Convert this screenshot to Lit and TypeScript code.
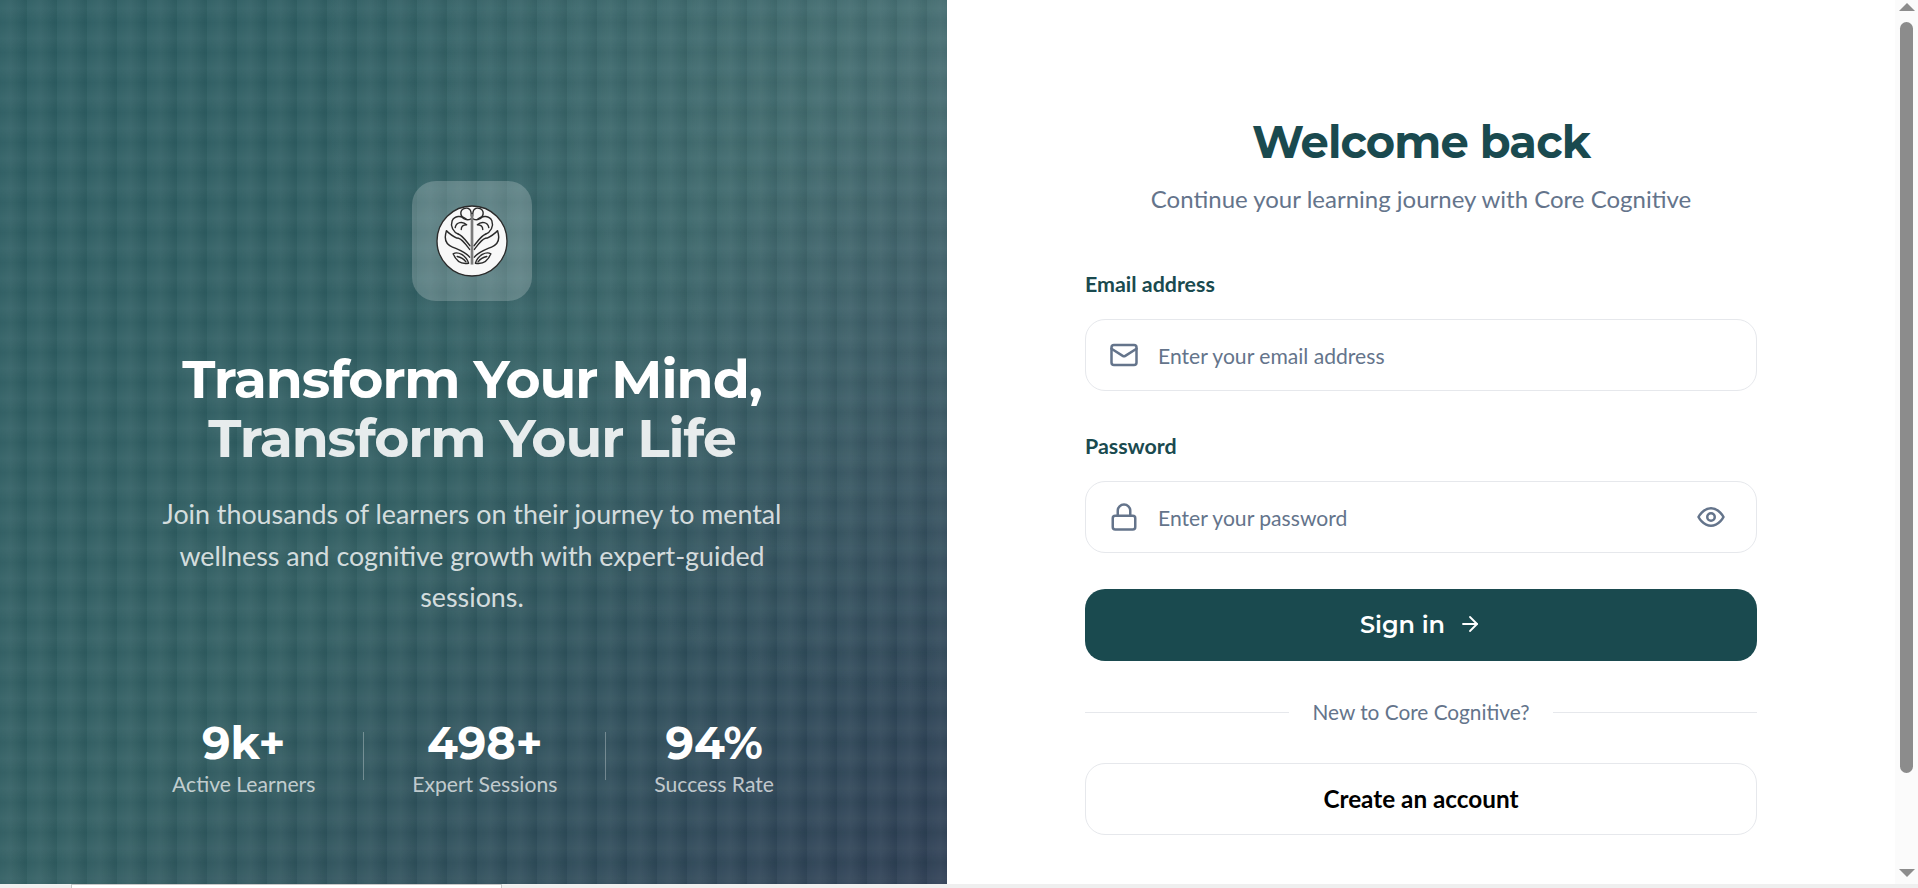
import { css, html, LitElement, svg } from "lit";
import { customElement } from "lit/decorators.js";

const brainHalf = svg`
  <path d="M137 74 C126 80 110 76 107 60 C105 44 124 38 133 46 C138 51 138 58 138 66" />
  <path d="M122 74 C108 64 88 64 81 80 C75 96 84 114 100 120" />
  <path d="M90 100 C93 84 112 80 124 92 C114 92 108 96 108 106" />
  <path d="M100 120 C112 124 122 140 134 154" />
  <path d="M64 110 C76 120 88 132 100 132 C110 134 120 148 133 165" />
  <path d="M64 110 C56 134 62 150 82 158 C100 166 120 172 133 188" />
  <path d="M84 178 C98 170 122 182 130 206 C108 210 92 198 84 178 Z" />
  <path d="M96 186 C106 188 116 194 122 202" />
`;

@customElement("app-root")
export class AppRoot extends LitElement {
  render() {
    return html`
      <div class="page">
        <div class="body">
          <main class="split">
            <section class="hero">
              <div class="logo-box">
                <svg class="logo" viewBox="33 33 214 214">
                  <circle cx="140" cy="140" r="104" fill="#f8f8f8" stroke="#2b2b2b" stroke-width="4" />
                  <g fill="none" stroke="#2a2a2a" stroke-width="4.2" stroke-linejoin="round" stroke-linecap="round">
                    ${brainHalf}
                    <g transform="matrix(-1 0 0 1 280 0)">${brainHalf}</g>
                  </g>
                  <path d="M140 60 V210" stroke="#7c7c7c" stroke-width="8" />
                </svg>
              </div>
              <h1>Transform Your Mind,<br /><span>Transform Your Life</span></h1>
              <p class="lead">
                Join thousands of learners on their journey to mental wellness
                and cognitive growth with expert-guided sessions.
              </p>
              <div class="stats">
                <div class="stat"><strong>9k+</strong><span>Active Learners</span></div>
                <i class="rule"></i>
                <div class="stat"><strong>498+</strong><span>Expert Sessions</span></div>
                <i class="rule"></i>
                <div class="stat"><strong>94%</strong><span>Success Rate</span></div>
              </div>
            </section>

            <section class="panel">
              <form class="form" @submit=${(e: Event) => e.preventDefault()}>
                <h2>Welcome back</h2>
                <p class="sub">Continue your learning journey with Core Cognitive</p>

                <label class="label email-label" for="email">Email address</label>
                <div class="field">
                  <svg class="icon" viewBox="0 0 24 24">
                    <rect x="2" y="4" width="20" height="16" rx="2" />
                    <path d="m22 7-8.97 5.7a1.94 1.94 0 0 1-2.06 0L2 7" />
                  </svg>
                  <input id="email" type="email" placeholder="Enter your email address" />
                </div>

                <label class="label password-label" for="password">Password</label>
                <div class="field">
                  <svg class="icon" viewBox="0 0 24 24">
                    <rect x="3" y="11" width="18" height="11" rx="2" />
                    <path d="M7 11V7a5 5 0 0 1 10 0v4" />
                  </svg>
                  <input id="password" type="password" placeholder="Enter your password" />
                  <svg class="icon eye" viewBox="0 0 24 24">
                    <path d="M2 12s3.6-7 10-7 10 7 10 7-3.6 7-10 7-10-7-10-7Z" />
                    <circle cx="12" cy="12" r="3" />
                  </svg>
                </div>

                <button class="primary" type="submit">
                  Sign in
                  <svg viewBox="0 0 24 24">
                    <path d="M5 12h14" />
                    <path d="m12 5 7 7-7 7" />
                  </svg>
                </button>

                <div class="divider"><span>New to Core Cognitive?</span></div>

                <button class="secondary" type="button">Create an account</button>
              </form>
            </section>
          </main>

          <div class="vbar">
            <i class="arrow up"></i>
            <i class="vthumb"></i>
            <i class="arrow down"></i>
          </div>
        </div>
        <div class="hbar"><i class="hthumb"></i></div>
      </div>
    `;
  }

  static styles = css`
    :host {
      display: block;
      height: 888px;
      overflow: hidden;
      font-family: "Lato", "Liberation Sans", sans-serif;
    }

    * {
      box-sizing: border-box;
    }

    .page {
      display: flex;
      flex-direction: column;
      height: 888px;
    }

    .body {
      display: flex;
      height: 884px;
    }

    .split {
      flex: 1;
      display: grid;
      grid-template-columns: 947px 1fr;
    }

    .hero {
      display: flex;
      flex-direction: column;
      align-items: center;
      padding: 181px 0 0;
      color: #fff;
      background-color: #2d5c60;
      background-image:
        linear-gradient(90deg, rgba(255, 255, 255, 0.025), rgba(255, 255, 255, 0.05) 45%, rgba(0, 0, 0, 0.035)),
        linear-gradient(180deg, rgba(0, 0, 0, 0.02), rgba(255, 255, 255, 0.03) 50%, rgba(0, 0, 0, 0.02)),
        radial-gradient(ellipse 640px 640px at 100% 8%, rgba(255, 255, 255, 0.1), rgba(255, 255, 255, 0)),
        linear-gradient(135deg, #2c5e63 0%, #2f5d61 50%, #2c3d53 100%);
      background-size: 30px 30px, 30px 30px, 100% 100%, 100% 100%;
      background-position: -3px 0, 0 -7px, 0 0, 0 0;
    }

    .logo-box {
      display: flex;
      align-items: center;
      justify-content: center;
      width: 120px;
      height: 120px;
      margin-left: -3px;
      border-radius: 24px;
      background: rgba(255, 255, 255, 0.2);
    }

    .logo {
      display: block;
      width: 72px;
      height: 72px;
    }

    h1 {
      margin: 48px 0 0;
      width: 100%;
      padding-right: 3px;
      font-family: "Montserrat", "Inter", sans-serif;
      font-size: 53.6px;
      font-weight: 700;
      letter-spacing: -0.02em;
      line-height: 59px;
      text-align: center;
    }

    h1 span {
      color: rgba(255, 255, 255, 0.88);
    }

    .lead {
      width: 660px;
      margin: 27px 0 0;
      padding-right: 3px;
      font-size: 26.8px;
      line-height: 41.6px;
      text-align: center;
      color: rgba(255, 255, 255, 0.8);
    }

    .stats {
      display: flex;
      align-items: center;
      gap: 48px;
      margin: 97px 1px 0 0;
    }

    .stat {
      display: flex;
      flex-direction: column;
      align-items: center;
    }

    .stat strong {
      margin-bottom: 1px;
      font-family: "Montserrat", "Inter", sans-serif;
      font-size: 44.8px;
      font-weight: 700;
      line-height: 54px;
    }

    .stat span {
      font-size: 21.1px;
      line-height: 26px;
      color: rgba(255, 255, 255, 0.7);
    }

    .rule {
      width: 1px;
      height: 48px;
      background: rgba(255, 255, 255, 0.3);
    }

    .panel {
      display: flex;
      justify-content: center;
      background: #fff;
    }

    .form {
      display: flex;
      flex-direction: column;
      width: 672px;
      padding-top: 115px;
    }

    h2 {
      margin: 0;
      font-family: "Montserrat", "Inter", sans-serif;
      font-size: 44.8px;
      font-weight: 700;
      letter-spacing: -0.02em;
      line-height: 54px;
      text-align: center;
      color: #1a4a4f;
    }

    .sub {
      margin: 15px 0 0;
      font-size: 24px;
      line-height: 30px;
      text-align: center;
      color: #64748b;
    }

    .label {
      font-size: 21.4px;
      font-weight: 700;
      line-height: 24px;
      color: #1a4a4f;
    }

    .email-label {
      margin-top: 58px;
    }

    .password-label {
      margin-top: 43px;
    }

    .field {
      display: flex;
      align-items: center;
      gap: 19px;
      height: 72px;
      margin-top: 23px;
      padding: 0 30px 0 23px;
      border: 1px solid #e6e8ec;
      border-radius: 20px;
      background: #fff;
    }

    .icon {
      flex: none;
      width: 30px;
      height: 30px;
      fill: none;
      stroke: #64748b;
      stroke-width: 2;
      stroke-linecap: round;
      stroke-linejoin: round;
    }

    input {
      flex: 1;
      min-width: 0;
      padding: 0;
      border: 0;
      outline: 0;
      background: transparent;
      font: inherit;
      font-size: 21.12px;
      color: #1a4a4f;
    }

    input::placeholder {
      color: #64748b;
      opacity: 1;
    }

    .primary,
    .secondary {
      display: flex;
      align-items: center;
      justify-content: center;
      height: 72px;
      padding: 0 0 2px;
      border-radius: 20px;
      cursor: pointer;
    }

    .primary {
      gap: 13px;
      margin-top: 36px;
      border: 0;
      background: #1a4a4f;
      color: #fff;
      font-family: "Montserrat", "Inter", sans-serif;
      font-size: 24px;
      font-weight: 600;
    }

    .primary svg {
      width: 24px;
      height: 24px;
      fill: none;
      stroke: #fff;
      stroke-width: 1.8;
      stroke-linecap: round;
      stroke-linejoin: round;
    }

    .divider {
      display: flex;
      align-items: center;
      gap: 24px;
      margin-top: 36px;
      height: 30px;
      font-size: 20.8px;
      color: #64748b;
    }

    .divider span {
      margin-top: -2px;
    }

    .divider::before,
    .divider::after {
      content: "";
      flex: 1;
      height: 1px;
      background: #e6e8ec;
    }

    .secondary {
      margin-top: 36px;
      border: 1px solid #e6e8ec;
      background: #fff;
      color: #000;
      font-family: inherit;
      font-size: 24.3px;
      font-weight: 700;
    }

    .vbar {
      flex: none;
      display: flex;
      flex-direction: column;
      align-items: center;
      width: 23px;
      padding: 3px 0 7px;
      background: #fbfbfb;
    }

    .arrow {
      flex: none;
      width: 0;
      height: 0;
      border-left: 8px solid transparent;
      border-right: 8px solid transparent;
    }

    .arrow.up {
      border-bottom: 8px solid #8c8c8c;
    }

    .arrow.down {
      margin-top: auto;
      border-top: 8px solid #8c8c8c;
    }

    .vthumb {
      flex: none;
      width: 13px;
      height: 751px;
      margin-top: 11px;
      border-radius: 7px;
      background: #8c8c8c;
    }

    .hbar {
      flex: none;
      height: 4px;
      padding-left: 71px;
      background: #efefef;
    }

    .hthumb {
      display: block;
      width: 431px;
      height: 4px;
      border: 1px solid #c8c8c8;
      border-bottom: 0;
      background: #fff;
    }
  `;
}

declare global {
  interface HTMLElementTagNameMap {
    "app-root": AppRoot;
  }
}
